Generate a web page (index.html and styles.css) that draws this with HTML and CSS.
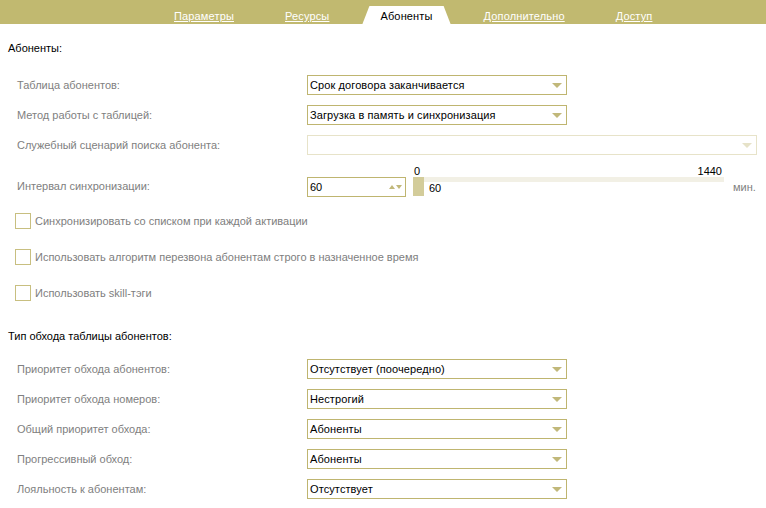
FILE: index.html
```html
<!DOCTYPE html>
<html lang="ru">
<head>
<meta charset="utf-8">
<title>Абоненты</title>
<link rel="stylesheet" href="styles.css">
</head>
<body>
<div class="tabbar">
  <a class="tab">Параметры</a>
  <a class="tab">Ресурсы</a>
  <span class="tab active">Абоненты</span>
  <a class="tab">Дополнительно</a>
  <a class="tab">Доступ</a>
</div>

<div class="content">
  <div class="section-title first">Абоненты:</div>

  <div class="rows">
    <div class="row">
      <span class="label">Таблица абонентов:</span>
      <div class="select"><span>Срок договора заканчивается</span><i class="arrow"></i></div>
    </div>
    <div class="row">
      <span class="label">Метод работы с таблицей:</span>
      <div class="select"><span>Загрузка в память и синхронизация</span><i class="arrow"></i></div>
    </div>
    <div class="row">
      <span class="label">Служебный сценарий поиска абонента:</span>
      <div class="select wide disabled"><span></span><i class="arrow"></i></div>
    </div>
    <div class="row interval">
      <span class="label">Интервал синхронизации:</span>
      <div class="interval-field">
        <div class="spin"><span>60</span><i class="up"></i><i class="down"></i></div>
        <div class="slider">
          <div class="scale"><span>0</span><span>1440</span></div>
          <div class="rail">
            <div class="handle"></div>
            <div class="track"><span>60</span></div>
          </div>
        </div>
        <span class="unit">мин.</span>
      </div>
    </div>
  </div>

  <div class="checks">
    <label class="check"><i class="box"></i><span>Синхронизировать со списком при каждой активации</span></label>
    <label class="check"><i class="box"></i><span>Использовать алгоритм перезвона абонентам строго в назначенное время</span></label>
    <label class="check"><i class="box"></i><span>Использовать skill-тэги</span></label>
  </div>

  <div class="section-title second">Тип обхода таблицы абонентов:</div>

  <div class="rows">
    <div class="row">
      <span class="label">Приоритет обхода абонентов:</span>
      <div class="select"><span>Отсутствует (поочередно)</span><i class="arrow"></i></div>
    </div>
    <div class="row">
      <span class="label">Приоритет обхода номеров:</span>
      <div class="select"><span>Нестрогий</span><i class="arrow"></i></div>
    </div>
    <div class="row">
      <span class="label">Общий приоритет обхода:</span>
      <div class="select"><span>Абоненты</span><i class="arrow"></i></div>
    </div>
    <div class="row">
      <span class="label">Прогрессивный обход:</span>
      <div class="select"><span>Абоненты</span><i class="arrow"></i></div>
    </div>
    <div class="row">
      <span class="label">Лояльность к абонентам:</span>
      <div class="select"><span>Отсутствует</span><i class="arrow"></i></div>
    </div>
  </div>
</div>
</body>
</html>
```

FILE: styles.css
```css
* { box-sizing: border-box; }

html, body {
  margin: 0;
  padding: 0;
  background: #ffffff;
  font-family: "Liberation Sans", Arial, sans-serif;
  font-size: 11px;
  color: #000;
}

.tabbar {
  height: 24px;
  background: #c1b970;
  display: flex;
  align-items: flex-end;
  padding-left: 156px;
  gap: 15px;
}

.tab {
  height: 18px;
  line-height: 18px;
  padding: 0 18px;
  padding-top: 1px;
  color: #ffffff;
  text-decoration: underline;
  white-space: nowrap;
  letter-spacing: 0.15px;
}

.tab.active {
  background: #ffffff;
  color: #000;
  text-decoration: none;
  clip-path: polygon(7px 0, calc(100% - 7px) 0, 100% 100%, 0 100%);
}

.content {
  padding-left: 8px;
}

.section-title {
  line-height: 14px;
  height: 14px;
}

.section-title.first { margin-top: 17px; margin-bottom: 20px; }
.section-title.second { margin-top: 28px; margin-bottom: 16px; }

.rows {
  display: flex;
  flex-direction: column;
  gap: 10px;
  padding-left: 9px;
}

.row {
  display: grid;
  grid-template-columns: 290px auto;
  align-items: center;
}

.label {
  color: #808080;
}

.select {
  width: 260px;
  height: 20px;
  border: 1px solid #bfb570;
  display: flex;
  align-items: center;
  justify-content: space-between;
  padding: 0 4px 0 2px;
  letter-spacing: 0.1px;
}

.select.wide { width: 450px; }
.select.disabled { border-color: #e7e3c9; }

.arrow {
  width: 0;
  height: 0;
  border-left: 5px solid transparent;
  border-right: 5px solid transparent;
  border-top: 5px solid #c1b87a;
  margin-top: 1px;
}

.select.disabled .arrow { border-top-color: #e6e2c8; }

.row.interval {
  align-items: end;
}

.row.interval .label {
  line-height: 20px;
}

.interval-field {
  display: flex;
  align-items: flex-end;
}

.spin {
  width: 99px;
  height: 20px;
  border: 1px solid #bfb570;
  display: flex;
  align-items: center;
  padding: 0 3px 0 2px;
  margin-bottom: -1px;
}

.spin span { flex: 1; }

.spin .up {
  width: 0; height: 0;
  border-left: 3px solid transparent;
  border-right: 3px solid transparent;
  border-bottom: 4px solid #c1b87a;
}

.spin .down {
  width: 0; height: 0;
  border-left: 3px solid transparent;
  border-right: 3px solid transparent;
  border-top: 4px solid #c1b87a;
  margin-left: 1px;
}

.slider {
  width: 311px;
  margin-left: 7px;
  display: flex;
  flex-direction: column;
}

.scale {
  display: flex;
  justify-content: space-between;
  line-height: 12px;
  height: 12px;
  padding: 0 2px 0 1px;
}

.rail {
  display: flex;
  height: 19px;
}

.handle {
  width: 11px;
  height: 19px;
  background: #d3cc9a;
}

.track {
  flex: 1;
  background: linear-gradient(#f2f0e5, #f2f0e5) top / 100% 5px no-repeat;
  padding: 4px 0 0 5px;
  line-height: 14px;
}

.unit {
  color: #808080;
  margin-left: 9px;
  line-height: 18px;
}

.checks {
  display: flex;
  flex-direction: column;
  gap: 20px;
  margin-top: 17px;
  padding-left: 7px;
}

.check {
  display: flex;
  align-items: center;
  height: 16px;
  gap: 4px;
  color: #7e7e7e;
}

.box {
  width: 16px;
  height: 16px;
  border: 1px solid #c8bf80;
  background: #fff;
}
```
